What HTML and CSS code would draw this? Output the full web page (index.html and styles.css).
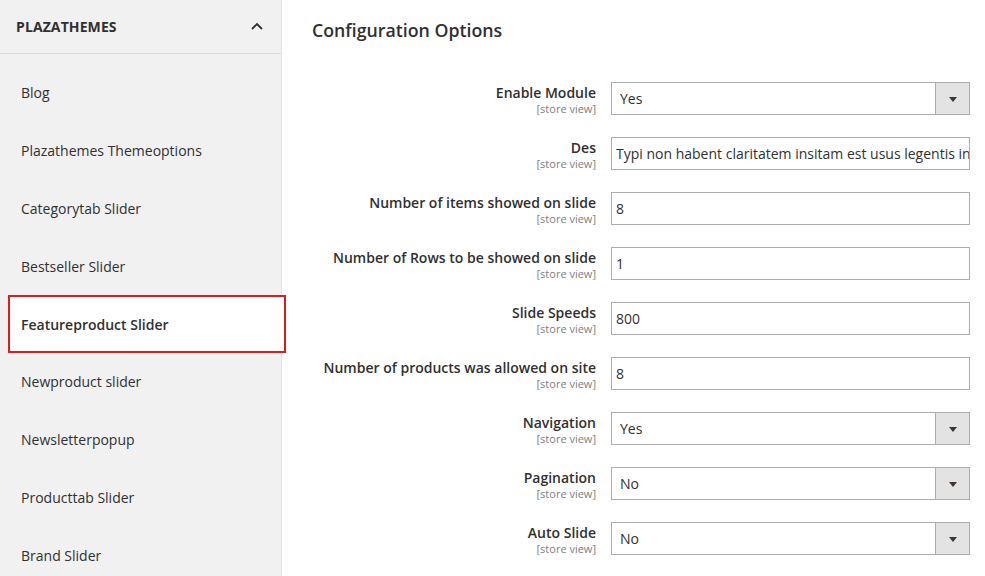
FILE: index.html
```html
<!DOCTYPE html>
<html>
<head>
<meta charset="utf-8">
<link rel="stylesheet" href="styles.css">
</head>
<body>
<div class="page">
  <aside class="sidebar">
    <div class="side-head">
      <span class="side-title">PLAZATHEMES</span>
      <svg class="chev" width="12" height="8" viewBox="0 0 12 8"><path d="M1 7 L6 2 L11 7" fill="none" stroke="#303030" stroke-width="1.8"/></svg>
    </div>
    <ul class="menu">
      <li class="item">Blog</li>
      <li class="item">Plazathemes Themeoptions</li>
      <li class="item">Categorytab Slider</li>
      <li class="item">Bestseller Slider</li>
      <li class="item active">Featureproduct Slider</li>
      <li class="item">Newproduct slider</li>
      <li class="item">Newsletterpopup</li>
      <li class="item">Producttab Slider</li>
      <li class="item">Brand Slider</li>
    </ul>
  </aside>
  <main class="main">
    <h2 class="title">Configuration Options</h2>
    <div class="form">
      <div class="row">
        <div class="label"><span class="name">Enable Module</span><span class="scope">[store view]</span></div>
        <div class="control select"><span class="val">Yes</span><span class="arrow"></span></div>
      </div>
      <div class="row">
        <div class="label"><span class="name">Des</span><span class="scope">[store view]</span></div>
        <div class="control text"><span class="val">Typi non habent claritatem insitam est usus legentis in iis qui facit eorum claritatem</span></div>
      </div>
      <div class="row">
        <div class="label"><span class="name">Number of items showed on slide</span><span class="scope">[store view]</span></div>
        <div class="control text"><span class="val">8</span></div>
      </div>
      <div class="row">
        <div class="label"><span class="name">Number of Rows to be showed on slide</span><span class="scope">[store view]</span></div>
        <div class="control text"><span class="val">1</span></div>
      </div>
      <div class="row">
        <div class="label"><span class="name">Slide Speeds</span><span class="scope">[store view]</span></div>
        <div class="control text"><span class="val">800</span></div>
      </div>
      <div class="row">
        <div class="label"><span class="name">Number of products was allowed on site</span><span class="scope">[store view]</span></div>
        <div class="control text"><span class="val">8</span></div>
      </div>
      <div class="row">
        <div class="label"><span class="name">Navigation</span><span class="scope">[store view]</span></div>
        <div class="control select"><span class="val">Yes</span><span class="arrow"></span></div>
      </div>
      <div class="row">
        <div class="label"><span class="name">Pagination</span><span class="scope">[store view]</span></div>
        <div class="control select"><span class="val">No</span><span class="arrow"></span></div>
      </div>
      <div class="row">
        <div class="label"><span class="name">Auto Slide</span><span class="scope">[store view]</span></div>
        <div class="control select"><span class="val">No</span><span class="arrow"></span></div>
      </div>
    </div>
  </main>
</div>
</body>
</html>
```

FILE: styles.css
```css
* { box-sizing: border-box; }
html, body { margin: 0; padding: 0; background: #fff; }
body {
  font-family: "Open Sans", "Liberation Sans", sans-serif;
  color: #303030;
  width: 985px;
  height: 576px;
  overflow: hidden;
}
.page {
  display: flex;
  height: 576px;
}
.sidebar {
  width: 282px;
  flex: none;
  background: #f1f1f1;
  border-right: 1px solid #e3e3e3;
  height: 576px;
}
.side-head {
  height: 54px;
  display: flex;
  align-items: center;
  justify-content: space-between;
  padding: 0 18px 0 16px;
  border-bottom: 1px solid #dcdcdc;
}
.side-title {
  font-size: 14px;
  font-weight: 700;
  color: #303030;
  letter-spacing: 0.1px;
}
.chev { margin-top: -2px; }
.menu {
  list-style: none;
  margin: 0;
  padding: 10px 0 0 0;
}
.item {
  height: 57.8px;
  display: flex;
  align-items: center;
  padding-left: 21px;
  font-size: 14px;
  color: #303030;
}
.item.active {
  background: #fff;
  font-weight: 600;
  margin-left: 8px;
  margin-right: -5px;
  padding-left: 11px;
  border: 2px solid #e01b1b;
  position: relative;
}
.main {
  flex: 1;
  padding: 0 15px 0 30px;
}
.title {
  margin: 19px 0 0 0;
  font-size: 17.75px;
  line-height: 22px;
  font-weight: 600;
  color: #303030;
}
.form {
  margin-top: 41px;
  display: flex;
  flex-direction: column;
  gap: 22px;
}
.row {
  display: flex;
  gap: 15px;
  height: 33px;
}
.label {
  flex: 1;
  display: flex;
  flex-direction: column;
  align-items: flex-end;
  padding-top: 2px;
}
.name {
  font-size: 14px;
  font-weight: 600;
  line-height: 18px;
  color: #303030;
}
.scope {
  font-size: 11px;
  line-height: 13px;
  color: #808080;
}
.control {
  width: 359px;
  flex: none;
  height: 33px;
  border: 1px solid #adadad;
  background: #fff;
  display: flex;
  align-items: center;
  font-size: 14px;
  color: #303030;
  overflow: hidden;
  white-space: nowrap;
}
.control.text { padding-left: 4px; }
.control.select { padding-left: 8px; }
.val { flex: 1; overflow: hidden; }
.arrow {
  width: 34px;
  height: 100%;
  flex: none;
  background: #e3e3e3;
  border-left: 1px solid #adadad;
  display: flex;
  align-items: center;
  justify-content: center;
}
.arrow::after {
  content: "";
  border-left: 4px solid transparent;
  border-right: 4px solid transparent;
  border-top: 5px solid #41362f;
  margin-top: 1px;
}
```
